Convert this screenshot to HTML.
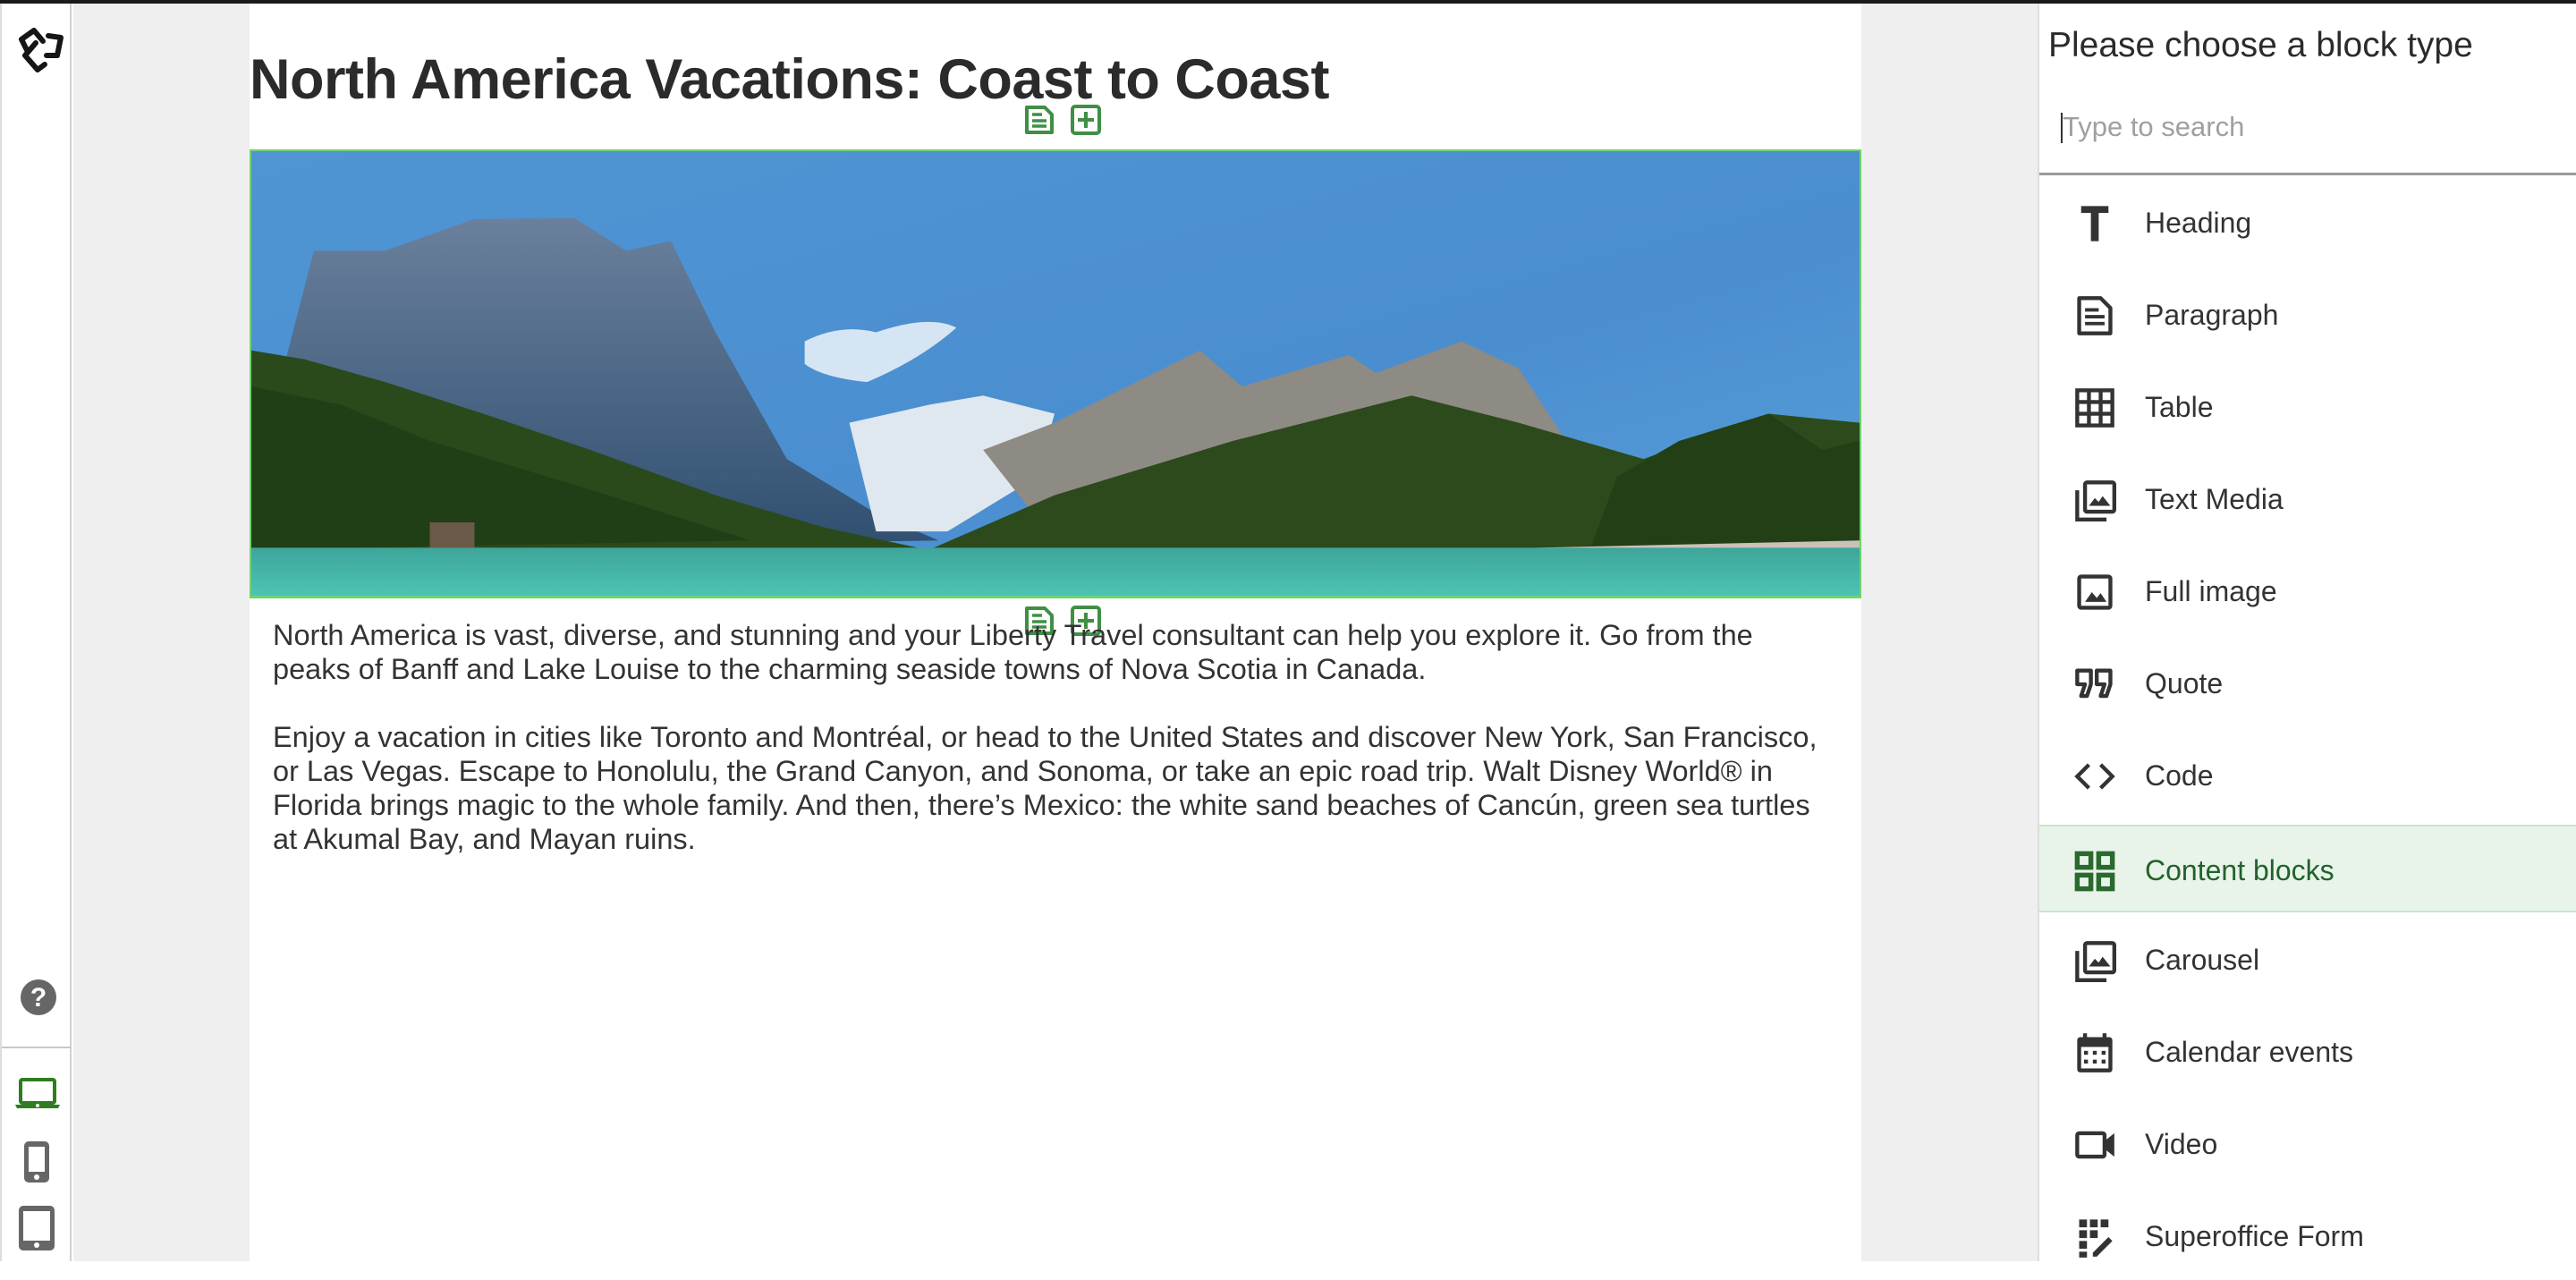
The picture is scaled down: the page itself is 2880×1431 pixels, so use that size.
<!DOCTYPE html>
<html><head><meta charset="utf-8"><style>
*{margin:0;padding:0;box-sizing:border-box}
html,body{width:2880px;height:1410px;overflow:hidden;background:#fff;font-family:"Liberation Sans",sans-serif;color:#333}
.topbar{position:absolute;left:0;top:0;width:2880px;height:4px;background:#1a1a1a}
.side{position:absolute;left:0;top:4px;width:80px;height:1406px;background:#fff;border-left:2px solid #ddd;border-right:2px solid #d0d0d0}
.gray1{position:absolute;left:82px;top:4px;width:197px;height:1406px;background:#efefef}
.main{position:absolute;left:279px;top:4px;width:1802px;height:1406px;background:#fff}
.gray2{position:absolute;left:2081px;top:4px;width:197px;height:1406px;background:#efefef}
.panel{position:absolute;left:2278px;top:4px;width:602px;height:1406px;background:#fff;border-left:2px solid #ddd}
h1{position:absolute;left:0;top:49px;font-size:63px;font-weight:bold;color:#2b2b2b;letter-spacing:-0.5px;white-space:nowrap}
.img{position:absolute;left:0;top:163px;width:1802px;height:499px;border:2px solid #6fd36f;border-bottom:none}
.gline{position:absolute;left:0;top:662px;width:1802px;height:3px;background:#6fd36f}
p{position:absolute;left:26px;width:1740px;font-size:32.5px;line-height:38px;color:#333}
.ic{position:absolute;width:36px;height:36px}
.ptitle{position:absolute;left:10px;top:25px;font-size:39px;color:#2b2b2b;white-space:nowrap}
.search{position:absolute;left:26px;top:120px;font-size:31px;color:#a0a0a0}
.caret{position:absolute;left:24px;top:122px;width:2px;height:34px;background:#333}
.uline{position:absolute;left:0;top:189px;width:602px;height:3px;background:#9a9a9a}
.item{position:absolute;left:0;width:600px;height:98px}
.item svg{position:absolute;left:38px;top:26px;width:48px;height:48px}
.item span{position:absolute;left:118px;top:31px;font-size:32px;color:#333;white-space:nowrap}
.sel{background:#e8f4ea;border-top:2px solid #c4e8c8;border-bottom:2px solid #c4e8c8}
.sel span{color:#22622a}
</style></head><body>
<div class="topbar"></div>
<div class="side">
<svg style="position:absolute;left:14px;top:22px" width="56" height="56" viewBox="0 0 56 56"><g fill="none" stroke="#151515" stroke-width="6" stroke-linecap="round" stroke-linejoin="round"><path d="M14 30 L8 18 L22 8 L32 20"/><path d="M38 14 L52 16 L48 36 L36 36"/><path d="M24 22 L12 36 L26 52 L34 46"/></g></svg>
<svg style="position:absolute;left:19px;top:1089px" width="44" height="44" viewBox="0 0 44 44"><circle cx="22" cy="22" r="20" fill="#666"/><text x="22" y="32" font-size="30" font-weight="bold" fill="#fff" text-anchor="middle" font-family="Liberation Sans">?</text></svg>
<div style="position:absolute;left:0;top:1166px;width:78px;height:2px;background:#c8c8c8"></div>
<svg style="position:absolute;left:15px;top:1201px" width="50" height="36" viewBox="0 0 50 36"><rect x="6" y="2" width="38" height="26" rx="2" fill="none" stroke="#2e7d1e" stroke-width="4"/><path d="M0 30 H50 L48 34 H2 Z" fill="#2e7d1e"/><circle cx="25" cy="31" r="2" fill="#fff"/></svg>
<svg style="position:absolute;left:25px;top:1272px" width="28" height="46" viewBox="0 0 28 46"><rect x="0" y="0" width="28" height="46" rx="5" fill="#666"/><rect x="5" y="6" width="18" height="28" fill="#fff"/><circle cx="14" cy="40" r="3" fill="#fff"/></svg>
<svg style="position:absolute;left:19px;top:1344px" width="40" height="50" viewBox="0 0 40 50"><rect x="0" y="0" width="40" height="50" rx="5" fill="#666"/><rect x="5" y="6" width="30" height="33" fill="#fff"/><circle cx="20" cy="44" r="3" fill="#fff"/></svg>
</div>
<div class="gray1"></div>
<div class="main">
<h1>North America Vacations: Coast to Coast</h1>
<svg class="ic" style="left:865px;top:112px" viewBox="0 0 36 36"><path d="M4 4 H24 L32 12 V32 H4 Z" fill="none" stroke="#3f8f45" stroke-width="4" stroke-linejoin="round"/><path d="M10 12 H21 M10 19 H26 M10 25 H26" stroke="#3f8f45" stroke-width="3.5"/></svg>
<svg class="ic" style="left:917px;top:112px" viewBox="0 0 36 36"><rect x="3" y="3" width="30" height="30" rx="3" fill="none" stroke="#3f8f45" stroke-width="4"/><path d="M18 9 V27 M9 18 H27" stroke="#3f8f45" stroke-width="4"/></svg>
<div class="img">
<svg width="1798" height="497" viewBox="0 0 1802 491" preserveAspectRatio="none">
<defs>
<linearGradient id="sky" x1="0" y1="0" x2="1" y2="1"><stop offset="0" stop-color="#4f95d3"/><stop offset="0.6" stop-color="#4a8ed0"/><stop offset="1" stop-color="#5aa0d8"/></linearGradient>
<linearGradient id="mt" x1="0" y1="0" x2="0" y2="1"><stop offset="0" stop-color="#6a809c"/><stop offset="1" stop-color="#2f4f70"/></linearGradient>
<linearGradient id="wat" x1="0" y1="0" x2="0" y2="1"><stop offset="0" stop-color="#3ea59a"/><stop offset="1" stop-color="#4cc4b6"/></linearGradient>
</defs>
<rect width="1802" height="491" fill="url(#sky)"/>
<path d="M620 210 Q660 190 700 200 Q760 180 790 195 Q750 230 690 255 Q640 250 620 235Z" fill="#e6eef6" opacity="0.9"/>
<path d="M40 225 L70 110 L150 110 L250 75 L362 74 L420 110 L470 99 L520 200 L600 340 L700 400 L770 430 L40 440Z" fill="url(#mt)"/>
<path d="M670 300 L760 280 L820 270 L900 290 L880 360 L780 420 L700 420Z" fill="#dfe7ef"/>
<path d="M820 330 L900 300 L1063 220 L1110 260 L1230 225 L1260 245 L1356 210 L1420 240 L1480 330 L1200 360 L900 430Z" fill="#8e8a84"/>
<path d="M0 220 L60 230 L150 255 L260 290 L380 330 L520 380 L640 415 L747 438 L0 440Z" fill="#2a4a1c"/>
<path d="M0 260 L100 280 L200 320 L400 380 L560 430 L0 440Z" fill="#213f16"/>
<path d="M760 440 L900 380 L1100 320 L1300 270 L1420 300 L1560 340 L1700 290 L1802 300 L1802 440Z" fill="#2c4a1c"/>
<path d="M1500 440 L1530 360 L1600 320 L1700 290 L1760 330 L1802 320 L1802 440Z" fill="#223f16"/>
<rect x="200" y="410" width="50" height="30" fill="#6b5a4a"/>
<path d="M1440 438 L1802 430 L1802 452 L1450 450Z" fill="#c8c2b8"/>
<rect y="438" width="1802" height="53" fill="url(#wat)"/>
</svg>
</div>
<div class="gline"></div>
<svg class="ic" style="left:865px;top:672px" viewBox="0 0 36 36"><path d="M4 4 H24 L32 12 V32 H4 Z" fill="none" stroke="#3f8f45" stroke-width="4" stroke-linejoin="round"/><path d="M10 12 H21 M10 19 H26 M10 25 H26" stroke="#3f8f45" stroke-width="3.5"/></svg>
<svg class="ic" style="left:917px;top:672px" viewBox="0 0 36 36"><rect x="3" y="3" width="30" height="30" rx="3" fill="none" stroke="#3f8f45" stroke-width="4"/><path d="M18 9 V27 M9 18 H27" stroke="#3f8f45" stroke-width="4"/></svg>
<p style="top:687px">North America is vast, diverse, and stunning and your Liberty Travel consultant can help you explore it. Go from the peaks of Banff and Lake Louise to the charming seaside towns of Nova Scotia in Canada.</p>
<p style="top:801px">Enjoy a vacation in cities like Toronto and Montréal, or head to the United States and discover New York, San Francisco, or Las Vegas. Escape to Honolulu, the Grand Canyon, and Sonoma, or take an epic road trip. Walt Disney World® in Florida brings magic to the whole family. And then, there’s Mexico: the white sand beaches of Cancún, green sea turtles at Akumal Bay, and Mayan ruins.</p>
</div>
<div class="gray2"></div>
<div class="panel">
<div class="ptitle">Please choose a block type</div>
<div class="caret"></div><div class="search">Type to search</div>
<div class="uline"></div>
<div class="item" style="top:196px"><svg viewBox="0 0 44 44"><path d="M8 4 H36 V11 H26 V40 H18 V11 H8Z" fill="#333"/></svg><span>Heading</span></div>
<div class="item" style="top:299px"><svg viewBox="0 0 44 44"><path d="M6 4 H28 L38 14 V40 H6Z" fill="none" stroke="#333" stroke-width="4" stroke-linejoin="round"/><path d="M12 16 H26 M12 23 H32 M12 30 H32" stroke="#333" stroke-width="3.5"/></svg><span>Paragraph</span></div>
<div class="item" style="top:402px"><svg viewBox="0 0 44 44"><rect x="4" y="4" width="36" height="36" fill="none" stroke="#333" stroke-width="4"/><path d="M16 4 V40 M28 4 V40 M4 16 H40 M4 28 H40" stroke="#333" stroke-width="4"/></svg><span>Table</span></div>
<div class="item" style="top:505px"><svg viewBox="0 0 44 44"><path d="M4 12 V42 H34" fill="none" stroke="#333" stroke-width="4"/><rect x="12" y="4" width="30" height="30" rx="2" fill="none" stroke="#333" stroke-width="4"/><path d="M16 28 L22 20 L26 24 L30 18 L38 28Z" fill="#333"/></svg><span>Text Media</span></div>
<div class="item" style="top:608px"><svg viewBox="0 0 44 44"><rect x="6" y="6" width="32" height="32" rx="2" fill="none" stroke="#333" stroke-width="4"/><path d="M12 32 L19 22 L24 28 L28 23 L34 32Z" fill="#333"/></svg><span>Full image</span></div>
<div class="item" style="top:711px"><svg viewBox="0 0 44 44"><path d="M4 8 H18 V22 L14 34 H8 L12 22 H4Z M24 8 H38 V22 L34 34 H28 L32 22 H24Z" fill="none" stroke="#333" stroke-width="4" stroke-linejoin="round"/></svg><span>Quote</span></div>
<div class="item" style="top:814px"><svg viewBox="0 0 44 44"><path d="M16 10 L4 22 L16 34 M28 10 L40 22 L28 34" fill="none" stroke="#333" stroke-width="4"/></svg><span>Code</span></div>
<div class="item sel" style="top:918px"><svg viewBox="0 0 44 44"><g fill="none" stroke="#2a6a2e" stroke-width="5"><rect x="4" y="4" width="14" height="14"/><rect x="26" y="4" width="14" height="14"/><rect x="4" y="26" width="14" height="14"/><rect x="26" y="26" width="14" height="14"/></g></svg><span>Content blocks</span></div>
<div class="item" style="top:1020px"><svg viewBox="0 0 44 44"><path d="M4 12 V42 H34" fill="none" stroke="#333" stroke-width="4"/><rect x="12" y="4" width="30" height="30" rx="2" fill="none" stroke="#333" stroke-width="4"/><path d="M16 28 L22 20 L26 24 L30 18 L38 28Z" fill="#333"/></svg><span>Carousel</span></div>
<div class="item" style="top:1123px"><svg viewBox="0 0 44 44"><rect x="4" y="6" width="36" height="36" rx="3" fill="#333"/><rect x="8" y="16" width="28" height="22" fill="#fff"/><rect x="10" y="2" width="4" height="8" fill="#333"/><rect x="30" y="2" width="4" height="8" fill="#333"/><g fill="#333"><rect x="11" y="20" width="4" height="4"/><rect x="20" y="20" width="4" height="4"/><rect x="29" y="20" width="4" height="4"/><rect x="11" y="29" width="4" height="4"/><rect x="20" y="29" width="4" height="4"/><rect x="29" y="29" width="4" height="4"/></g></svg><span>Calendar events</span></div>
<div class="item" style="top:1226px"><svg viewBox="0 0 44 44"><rect x="4" y="10" width="28" height="24" rx="2" fill="none" stroke="#333" stroke-width="4"/><path d="M32 18 L42 10 V34 L32 26Z" fill="#333"/></svg><span>Video</span></div>
<div class="item" style="top:1329px"><svg viewBox="0 0 44 44"><g fill="#333"><rect x="6" y="4" width="8" height="8"/><rect x="17" y="4" width="8" height="8"/><rect x="28" y="4" width="8" height="8"/><rect x="6" y="15" width="8" height="8"/><rect x="17" y="15" width="8" height="8"/><rect x="6" y="26" width="8" height="8"/><rect x="6" y="37" width="8" height="6"/></g><path d="M20 38 L36 22 L40 26 L24 42 H20Z" fill="#333"/></svg><span>Superoffice Form</span></div>
</div>
</body></html>
